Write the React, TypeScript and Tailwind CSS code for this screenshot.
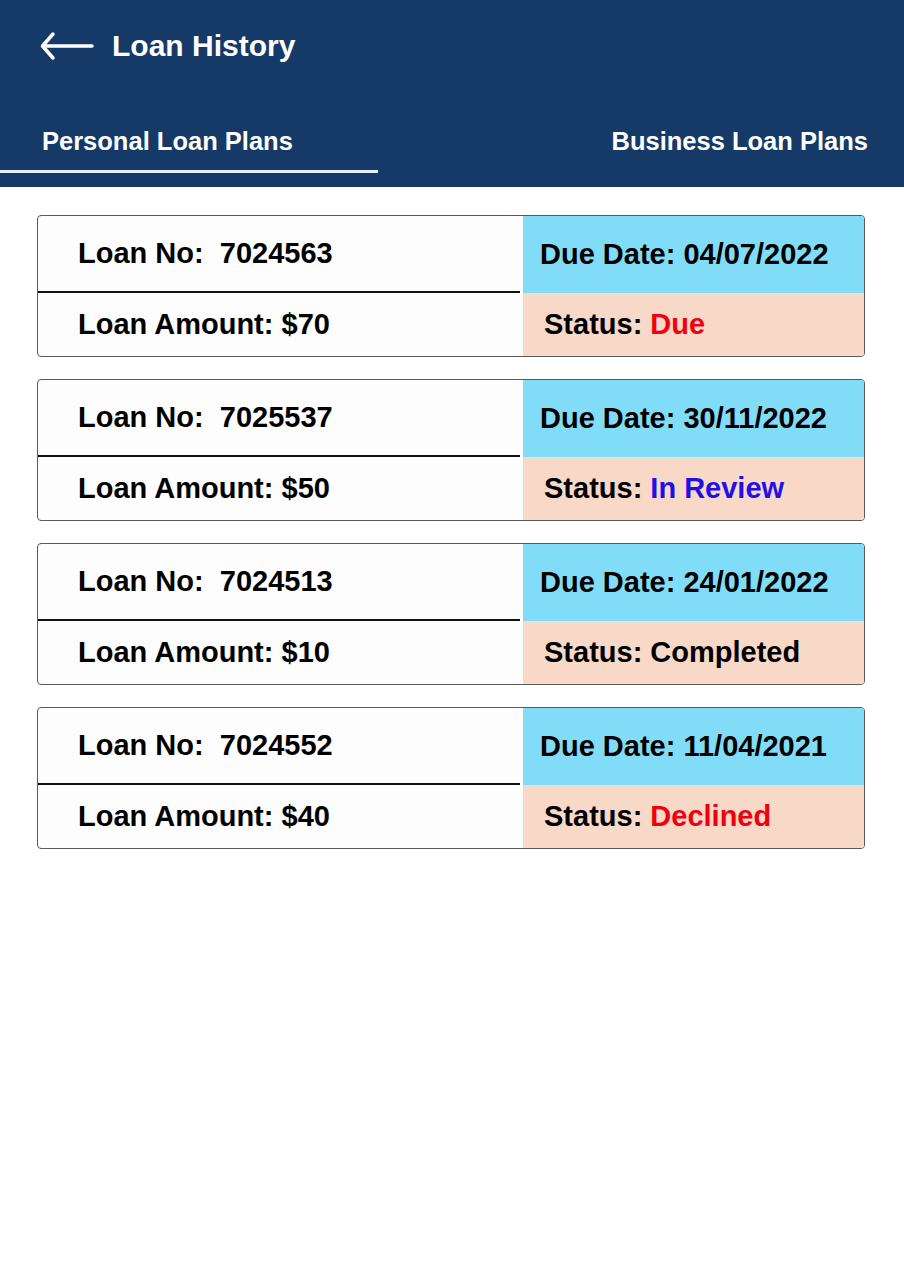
import React from "react";

type Loan = {
  no: string;
  amount: string;
  due: string;
  status: string;
  statusClass: string;
};

const loans: Loan[] = [
  { no: "7024563", amount: "$70", due: "04/07/2022", status: "Due", statusClass: "text-[#f0000f]" },
  { no: "7025537", amount: "$50", due: "30/11/2022", status: "In Review", statusClass: "text-[#1f10e8]" },
  { no: "7024513", amount: "$10", due: "24/01/2022", status: "Completed", statusClass: "text-black" },
  { no: "7024552", amount: "$40", due: "11/04/2021", status: "Declined", statusClass: "text-[#f0000f]" },
];

function LoanCard({ loan }: { loan: Loan }) {
  return (
    <div className="flex h-[142px] rounded-[4px] border border-[#5a5a5a] bg-[#fdfdfd] overflow-hidden">
      <div className="flex w-[482px] flex-col">
        <div className="flex h-[75px] items-center pl-[40px] text-[29px] font-bold leading-none text-black whitespace-pre">
          {"Loan No:  " + loan.no}
        </div>
        <div className="h-[2px] bg-[#111]" />
        <div className="flex flex-1 items-center pl-[40px] text-[29px] font-bold leading-none text-black">
          Loan Amount: {loan.amount}
        </div>
      </div>
      <div className="ml-[3px] flex flex-1 flex-col">
        <div className="flex h-[77px] items-center bg-[#80dcf7] pl-[17px] text-[29px] font-bold leading-none text-black">
          Due Date: {loan.due}
        </div>
        <div className="flex flex-1 items-center bg-[#f8d8c6] pl-[21px] text-[29px] font-bold leading-none text-black">
          Status:&nbsp;<span className={loan.statusClass}>{loan.status}</span>
        </div>
      </div>
    </div>
  );
}

export default function App() {
  return (
    <div className="min-h-[1280px] w-[904px] bg-white [font-family:'Liberation_Sans',Arial,sans-serif]">
      <div className="bg-[#153a67] text-white">
        <div className="flex h-[92px] items-center">
          <svg className="ml-[40px]" width="54" height="30" viewBox="0 0 54 30" fill="none">
            <path d="M13 3 L2.5 15 L13 27" stroke="white" strokeWidth="3.5" strokeLinecap="round" strokeLinejoin="round" />
            <path d="M3 15 H52" stroke="white" strokeWidth="3.5" strokeLinecap="round" />
          </svg>
          <span className="ml-[18px] text-[30px] font-bold leading-none">Loan History</span>
        </div>
        <div className="flex justify-between pb-[14px]">
          <div className="w-[378px] border-b-[3px] border-[#e8f0fb] pt-[36px] pb-[16px] pl-[42px] text-[25.5px] font-bold leading-[26px]">
            Personal Loan Plans
          </div>
          <div className="pt-[36px] pr-[36px] text-[25.5px] font-bold leading-[26px]">
            Business Loan Plans
          </div>
        </div>
      </div>
      <div className="flex flex-col gap-[22px] pt-[28px] pl-[37px] pr-[39px]">
        {loans.map((l) => (
          <LoanCard key={l.no} loan={l} />
        ))}
      </div>
    </div>
  );
}
